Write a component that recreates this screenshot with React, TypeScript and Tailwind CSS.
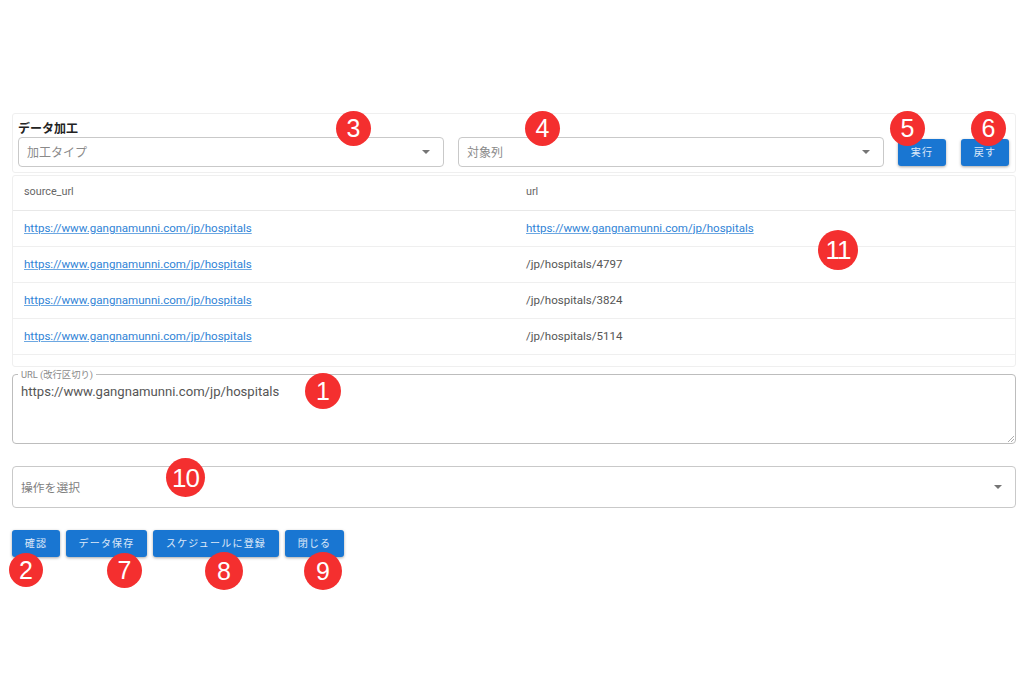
const font = "[font-family:Roboto,'Noto_Sans_CJK_JP',sans-serif]";

const HOSPITALS = "https://www.gangnamunni.com/jp/hospitals";

const rows = [
  { source: HOSPITALS, url: HOSPITALS, isLink: true },
  { source: HOSPITALS, url: "/jp/hospitals/4797", isLink: false },
  { source: HOSPITALS, url: "/jp/hospitals/3824", isLink: false },
  { source: HOSPITALS, url: "/jp/hospitals/5114", isLink: false },
];

const badges = [
  { label: "1", className: "left-[305px] top-[373px] h-9 w-9 text-[25px]" },
  { label: "2", className: "left-[9px] top-[553px] h-[34px] w-[34px] text-[25px]" },
  { label: "3", className: "left-[336px] top-[111px] h-[35px] w-[35px] text-[25px]" },
  { label: "4", className: "left-[525px] top-[111px] h-[35px] w-[35px] text-[25px]" },
  { label: "5", className: "left-[890px] top-[111px] h-[35px] w-[35px] text-[25px]" },
  { label: "6", className: "left-[971px] top-[111px] h-[35px] w-[35px] text-[25px]" },
  { label: "7", className: "left-[107px] top-[553px] h-[35px] w-[35px] text-[25px]" },
  { label: "8", className: "left-[205px] top-[552px] h-[38px] w-[38px] text-[25px]" },
  { label: "9", className: "left-[304px] top-[552px] h-[38px] w-[38px] text-[25px]" },
  { label: "10", className: "left-[166px] top-[458px] h-[39px] w-[39px] text-[26px] tracking-[-1px]" },
  { label: "11", className: "left-[818px] top-[230px] h-10 w-10 text-[26px] tracking-[-1px]" },
];

function Caret({ className }: { className?: string }) {
  return (
    <svg viewBox="0 0 10 5" className={className} aria-hidden="true">
      <path d="M0 0h10L5 5z" fill="#757575" />
    </svg>
  );
}

function Select({ label }: { label: string }) {
  return (
    <div className="flex h-[30px] flex-1 items-center justify-between rounded border border-[#c9c9c9] pl-2 pr-[13px]">
      <span className="pt-[2px] text-[12px] text-[#8a8a8a]">{label}</span>
      <Caret className="h-[4px] w-2" />
    </div>
  );
}

function Button({ label, className }: { label: string; className: string }) {
  return (
    <button
      type="button"
      className={`flex h-[27px] items-center justify-center rounded-[3px] bg-[#1976d2] text-[10px] tracking-[1.2px] text-white/85 shadow-[0_1px_3px_rgba(0,0,0,0.35)] ${className}`}
    >
      {label}
    </button>
  );
}

function Link({ href }: { href: string }) {
  return <span className="text-[#2f83d6] underline decoration-[#2f83d6]/70">{href}</span>;
}

export default function App() {
  return (
    <div className={`relative h-[683px] w-[1024px] overflow-hidden bg-white pl-3 pr-2 pt-[113px] ${font}`}>
      <div className="flex h-[60px] w-[1004px] rounded-[3px] border border-[#efefef] pl-[5px] pr-[6px] pt-[7px]">
        <div className="flex min-w-0 flex-1 flex-col">
          <div className="h-4 text-[12px] font-bold leading-[16px] text-[#222]">データ加工</div>
          <div className="flex gap-[14px]">
            <Select label="加工タイプ" />
            <Select label="対象列" />
          </div>
        </div>
        <div className="ml-[14px] flex gap-[15px] pt-[18px]">
          <Button label="実行" className="w-12" />
          <Button label="戻す" className="w-12" />
        </div>
      </div>

      <div className="mt-[2px] h-[192px] w-[1004px] rounded-[3px] border border-[#efefef]">
        <div className="grid h-[35px] grid-cols-[501px_1fr] items-center border-b border-[#e8e8e8] pb-[2px] text-[10.8px] text-[#666]">
          <div className="pl-[11px]">source_url</div>
          <div className="pl-3">url</div>
        </div>
        {rows.map((row) => (
          <div
            key={row.url}
            className="grid h-[36px] grid-cols-[501px_1fr] items-center border-b border-[#efefef] text-[11.55px] text-[#555]"
          >
            <div className="pl-[11px]">
              <Link href={row.source} />
            </div>
            <div className="pl-3">{row.isLink ? <Link href={row.url} /> : row.url}</div>
          </div>
        ))}
      </div>

      <div className="relative mt-[7px] h-[70px] w-[1004px] rounded border border-[#bdbdbd] px-2 pt-[9px] text-[13.1px] leading-[16px] text-[#555]">
        <span className="absolute -top-[5px] left-[5px] bg-white px-[3px] text-[9.3px] leading-[9px] text-[#8a8a8a]">
          URL (改行区切り)
        </span>
        {HOSPITALS}
        <svg viewBox="0 0 6 6" className="absolute bottom-[1px] right-[1px] h-[6px] w-[6px]" aria-hidden="true">
          <path d="M0 6 6 0M3 6l3-3" stroke="#999" strokeWidth="0.8" />
        </svg>
      </div>

      <div className="mt-[22px] flex h-[42px] w-[1004px] items-center justify-between rounded border border-[#c9c9c9] pl-2 pr-[13px]">
        <span className="pt-[4px] text-[11.8px] text-[#808080]">操作を選択</span>
        <Caret className="h-[4px] w-2" />
      </div>

      <div className="mt-[22px] flex gap-[6px]">
        <Button label="確認" className="w-12" />
        <Button label="データ保存" className="w-[81px]" />
        <Button label="スケジュールに登録" className="w-[126px]" />
        <Button label="閉じる" className="w-[59px]" />
      </div>

      {badges.map((badge) => (
        <div
          key={badge.label}
          className={`absolute flex items-center justify-center rounded-full bg-[#f42f2f] font-['Liberation_Sans'] leading-none text-white ${badge.className}`}
        >
          {badge.label}
        </div>
      ))}
    </div>
  );
}
